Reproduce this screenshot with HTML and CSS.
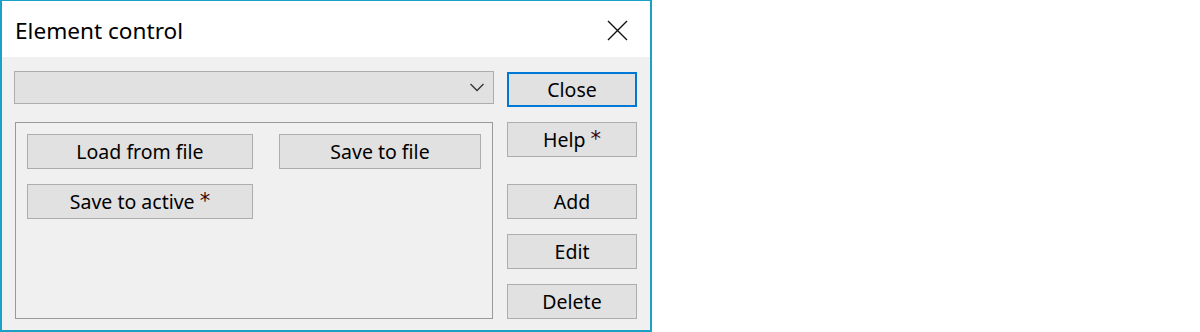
FILE: index.html
```html
<!DOCTYPE html>
<html lang="en">
<head>
  <meta charset="UTF-8">
  <title>Element control</title>
  <link rel="stylesheet" href="styles.css">
</head>
<body>
  <div class="pencere">

    <div class="baslik">
      <span class="baslik-yazi">Element control</span>
      <button class="kapat-x" title="Close">
        <svg width="21" height="21" viewBox="0 0 21 21">
          <path d="M1 1 L20 20 M20 1 L1 20" stroke="#111" stroke-width="1.4" fill="none"/>
        </svg>
      </button>
    </div>

    <div class="govde">

      <div class="sol">
        <div class="secim">
          <svg width="14" height="9" viewBox="0 0 14 9">
            <path d="M0.5 1 L7 7.5 L13.5 1" stroke="#333" stroke-width="1.3" fill="none"/>
          </svg>
        </div>

        <div class="grup">
          <div class="satir">
            <button class="dugme genis">Load from file</button>
            <button class="dugme orta">Save to file</button>
          </div>
          <div class="satir">
            <button class="dugme genis">Save to active <span class="yildiz">*</span></button>
          </div>
        </div>
      </div>

      <div class="sag">
        <button class="dugme aktif">Close</button>
        <button class="dugme">Help <span class="yildiz">*</span></button>
        <button class="dugme bosluk">Add</button>
        <button class="dugme">Edit</button>
        <button class="dugme">Delete</button>
      </div>

    </div>
  </div>
</body>
</html>
```

FILE: styles.css
```css
body {
  margin: 0;
  background: #ffffff;
  font-family: "Noto Sans", "Open Sans", sans-serif;
}

.pencere {
  width: 652px;
  height: 332px;
  box-sizing: border-box;
  border: 2px solid #1ba1c6;
  border-top-width: 1px;
  display: flex;
  flex-direction: column;
  background: #f0f0f0;
}

.baslik {
  height: 56px;
  background: #ffffff;
  display: flex;
  align-items: center;
  justify-content: space-between;
  padding: 0 22px 0 13px;
}

.baslik-yazi {
  font-size: 22.6px;
  color: #000;
  margin-top: 3px;
}

.kapat-x {
  border: none;
  background: none;
  padding: 0;
  margin-top: 3px;
  display: flex;
}

.govde {
  display: flex;
  gap: 13px;
  padding: 14px 12px 0 12px;
}

.sol {
  width: 480px;
  display: flex;
  flex-direction: column;
}

.secim {
  height: 33px;
  box-sizing: border-box;
  background: #e1e1e1;
  border: 1px solid #adadad;
  display: flex;
  align-items: center;
  justify-content: flex-end;
  padding-right: 9px;
}

.grup {
  margin: 18px 0 0 1px;
  width: 478px;
  height: 197px;
  box-sizing: border-box;
  border: 1px solid #9a9a9a;
  padding: 11px;
  display: flex;
  flex-direction: column;
  gap: 15px;
}

.satir {
  display: flex;
  gap: 26px;
}

.sag {
  width: 130px;
  display: flex;
  flex-direction: column;
  gap: 15px;
  padding-top: 1px;
}

.dugme {
  height: 35px;
  box-sizing: border-box;
  background: #e1e1e1;
  border: 1px solid #adadad;
  font-family: "Noto Sans", "Open Sans", sans-serif;
  font-size: 19.5px;
  color: #000;
  padding: 0;
}

.dugme.genis {
  width: 226px;
}

.dugme.orta {
  width: 202px;
}

.dugme.aktif {
  border: 2px solid #0078d7;
}

.dugme.bosluk {
  margin-top: 12px;
}

.yildiz {
  color: #3c0000;
  font-family: "DejaVu Sans", sans-serif;
  font-size: 21px;
  vertical-align: 1px;
}
```
